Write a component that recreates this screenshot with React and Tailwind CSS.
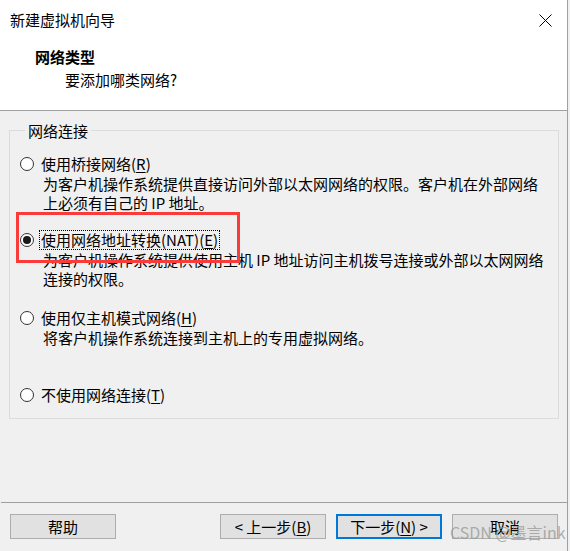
import React from "react";

const font = { fontFamily: '"Noto Sans CJK SC", "Noto Sans", sans-serif' };

function Radio({ checked }) {
  return (
    <span className="w-[14px] h-[14px] rounded-full border border-[#333] bg-white flex items-center justify-center shrink-0">
      {checked && <span className="w-[8px] h-[8px] rounded-full bg-[#1a1a1a]" />}
    </span>
  );
}

function Key({ k }) {
  return (
    <>
      (<span className="underline underline-offset-2">{k}</span>)
    </>
  );
}

function Option({ checked, label, hotkey, lines, focus, className = "" }) {
  return (
    <div className={className}>
      <div className="flex items-center h-[20px]">
        <Radio checked={checked} />
        <span
          className={`ml-[5px] leading-[18px] px-[1px] ${
            focus ? "border border-dotted border-black" : "border border-transparent"
          }`}
        >
          {label}
          <Key k={hotkey} />
        </span>
      </div>
      {lines &&
        lines.map((l) => (
          <div key={l} className="pl-[23px] leading-[19px]">
            {l}
          </div>
        ))}
    </div>
  );
}

function Button({ children, primary }) {
  return (
    <button
      className={`w-[106px] h-[25px] bg-[#e1e1e1] text-[15px] leading-none flex items-center justify-center ${
        primary ? "border-2 border-[#0078d7]" : "border border-[#adadad]"
      }`}
    >
      {children}
    </button>
  );
}

export default function App() {
  return (
    <div
      className="relative w-[570px] h-[551px] bg-[#f0f0f0] text-[15px] text-black overflow-hidden"
      style={font}
    >
      <div className="w-[568px] h-full border-r border-[#a0a0a0]">
        <div className="h-[111px] bg-white border-b border-[#a0a0a0]">
          <div className="flex items-center justify-between pt-[10px] pl-[10px] pr-[15px] h-[30px]">
            <span className="leading-[20px]">新建虚拟机向导</span>
            <svg width="13" height="13" viewBox="0 0 13 13">
              <path d="M0.5 0.5 L12.5 12.5 M12.5 0.5 L0.5 12.5" stroke="#000" strokeWidth="1" />
            </svg>
          </div>
          <div className="pl-[35px] mt-[17px] leading-[20px] font-bold">网络类型</div>
          <div className="pl-[65px] mt-[3px] leading-[20px]">要添加哪类网络?</div>
        </div>

        <fieldset className="relative ml-[9px] mt-[10px] w-[550px] h-[298px] border border-[#dcdcdc] pl-[10px]">
          <legend className="ml-[5px] px-[3px] leading-[19px]">网络连接</legend>

          <Option
            className="mt-[14px]"
            label="使用桥接网络"
            hotkey="R"
            lines={[
              "为客户机操作系统提供直接访问外部以太网网络的权限。客户机在外部网络",
              "上必须有自己的 IP 地址。",
            ]}
          />
          <Option
            className="mt-[18px]"
            checked
            focus
            label="使用网络地址转换(NAT)"
            hotkey="E"
            lines={[
              "为客户机操作系统提供使用主机 IP 地址访问主机拨号连接或外部以太网网络",
              "连接的权限。",
            ]}
          />
          <Option
            className="mt-[20px]"
            label="使用仅主机模式网络"
            hotkey="H"
            lines={["将客户机操作系统连接到主机上的专用虚拟网络。"]}
          />
          <Option className="mt-[38px]" label="不使用网络连接" hotkey="T" />

          <div className="absolute left-[6px] top-[72px] w-[224px] h-[51px] border-[3px] border-[#fb3a3a] pointer-events-none" />
        </fieldset>

        <div className="mt-[83px] ml-[1px] h-px bg-[#a0a0a0]" />

        <div className="flex mt-[11px] pl-[10px]">
          <Button>帮助</Button>
          <div className="flex gap-[10px] ml-[104px]">
            <Button>
              &lt;&nbsp;上一步<Key k="B" />
            </Button>
            <Button primary>
              下一步<Key k="N" />&nbsp;&gt;
            </Button>
            <Button>取消</Button>
          </div>
        </div>
      </div>

      <div className="absolute left-[450px] top-[521px] text-[16px] leading-[22px] text-[#9a9a9a]/80 pointer-events-none whitespace-nowrap">
        CSDN @墨言ink
      </div>
    </div>
  );
}
